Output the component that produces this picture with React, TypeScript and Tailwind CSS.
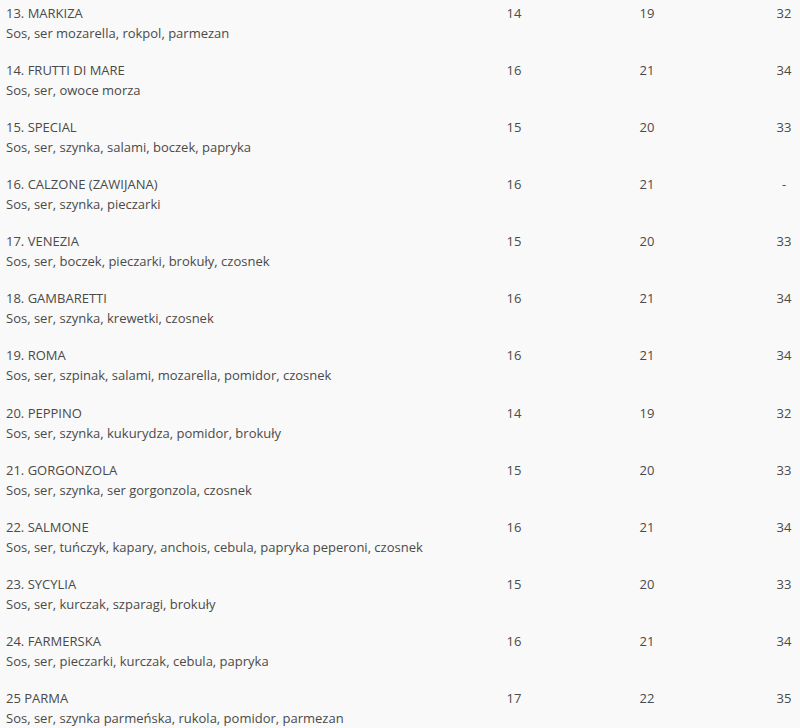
import React from "react";

type Pizza = { name: string; desc: string; s: string; m: string; l: string };

const pizzas: Pizza[] = [
  { name: "13. MARKIZA", desc: "Sos, ser mozarella, rokpol, parmezan", s: "14", m: "19", l: "32" },
  { name: "14. FRUTTI DI MARE", desc: "Sos, ser, owoce morza", s: "16", m: "21", l: "34" },
  { name: "15. SPECIAL", desc: "Sos, ser, szynka, salami, boczek, papryka", s: "15", m: "20", l: "33" },
  { name: "16. CALZONE (ZAWIJANA)", desc: "Sos, ser, szynka, pieczarki", s: "16", m: "21", l: "-" },
  { name: "17. VENEZIA", desc: "Sos, ser, boczek, pieczarki, brokuły, czosnek", s: "15", m: "20", l: "33" },
  { name: "18. GAMBARETTI", desc: "Sos, ser, szynka, krewetki, czosnek", s: "16", m: "21", l: "34" },
  { name: "19. ROMA", desc: "Sos, ser, szpinak, salami, mozarella, pomidor, czosnek", s: "16", m: "21", l: "34" },
  { name: "20. PEPPINO", desc: "Sos, ser, szynka, kukurydza, pomidor, brokuły", s: "14", m: "19", l: "32" },
  { name: "21. GORGONZOLA", desc: "Sos, ser, szynka, ser gorgonzola, czosnek", s: "15", m: "20", l: "33" },
  { name: "22. SALMONE", desc: "Sos, ser, tuńczyk, kapary, anchois, cebula, papryka peperoni, czosnek", s: "16", m: "21", l: "34" },
  { name: "23. SYCYLIA", desc: "Sos, ser, kurczak, szparagi, brokuły", s: "15", m: "20", l: "33" },
  { name: "24. FARMERSKA", desc: "Sos, ser, pieczarki, kurczak, cebula, papryka", s: "16", m: "21", l: "34" },
  { name: "25 PARMA", desc: "Sos, ser, szynka parmeńska, rukola, pomidor, parmezan", s: "17", m: "22", l: "35" },
];

const App: React.FC = () => {
  return (
    <div
      className="w-full min-h-screen bg-[#f9f9f9] text-[#4a4a4a] text-[13px] leading-[20px] overflow-hidden"
      style={{ fontFamily: '"Open Sans", "Liberation Sans", sans-serif' }}
    >
      {pizzas.map((p) => (
        <div key={p.name} className="grid grid-cols-[480px_68px_220px_32px] h-[57.08px] pt-[3px]">
          <div className="pl-[6px]">
            <div>{p.name}</div>
            <div>{p.desc}</div>
          </div>
          <div className="text-center">{p.s}</div>
          <div className="text-center pr-[22px]">{p.m}</div>
          <div className="text-center">{p.l}</div>
        </div>
      ))}
    </div>
  );
};

export default App;
